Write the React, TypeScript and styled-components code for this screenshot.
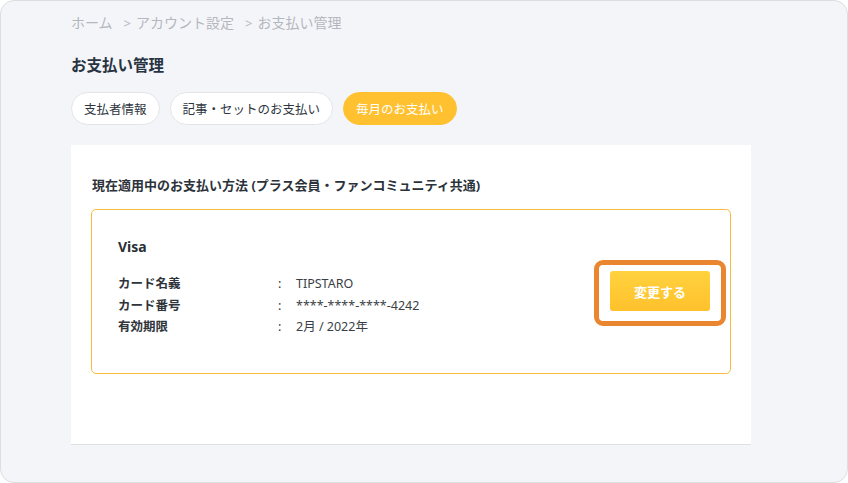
import styled, { createGlobalStyle } from "styled-components";

const GlobalStyle = createGlobalStyle`
  html, body {
    margin: 0;
    padding: 0;
    background: #ffffff;
  }
  * {
    box-sizing: border-box;
  }
`

const Frame = styled.div`
  width: 848px;
  height: 483px;
  border: 1px solid #dcdde0;
  border-radius: 14px;
  background: #f4f5f9;
  padding: 10px 96px 0 70px;
  font-family: "Noto Sans", "Noto Sans CJK JP", sans-serif;
  color: #283341;
  overflow: hidden;
`

const Breadcrumb = styled.div`
  display: flex;
  align-items: center;
  height: 22px;
  font-size: 14px;
  color: #b4b7bd;
`

const Crumb = styled.span<{ $first?: boolean }>`
  margin-left: ${p => (p.$first ? "0" : "11px")};
  &::before {
    content: ${p => (p.$first ? "none" : "'>'")};
    margin-right: 5px;
    font-size: 13px;
  }
`

const Title = styled.h1`
  margin: 20px 0 0;
  font-size: 15.5px;
  font-weight: 700;
  line-height: 24px;
  color: #283341;
`

const Tabs = styled.div`
  display: flex;
  gap: 10px;
  margin-top: 15px;
`

const Tab = styled.button<{ $active?: boolean }>`
  height: 33px;
  padding: 0 12px;
  border-radius: 17px;
  border: 1px solid ${p => (p.$active ? "#ffc12f" : "#e3e4e7")};
  background: ${p => (p.$active ? "#ffc12f" : "#ffffff")};
  color: ${p => (p.$active ? "#ffffff" : "#2e3540")};
  font-family: inherit;
  font-size: 12.5px;
  cursor: pointer;
`

const Panel = styled.section`
  margin-top: 20px;
  width: 680px;
  height: 300px;
  background: #ffffff;
  border-bottom: 1px solid #dfe0e3;
  padding: 31px 20px 0;
`

const Heading = styled.h2`
  margin: 0 0 0 1px;
  font-size: 13px;
  font-weight: 700;
  line-height: 18px;
  color: #2c323a;
`

const Card = styled.div`
  margin-top: 15px;
  height: 165px;
  border: 1px solid #f5bd3c;
  border-radius: 5px;
  padding: 0 4px 0 26px;
  display: flex;
  align-items: center;
  justify-content: space-between;
`

const Info = styled.div`
  display: flex;
  flex-direction: column;
  margin-bottom: 8px;
`

const Brand = styled.div`
  font-size: 14px;
  font-weight: 700;
  line-height: 20px;
  color: #2a2f36;
  margin-bottom: 16px;
`

const Row = styled.div`
  display: flex;
  font-size: 12.5px;
  line-height: 21.5px;
  color: #2f343b;
`

const Label = styled.span`
  width: 160px;
  font-weight: 700;
`

const Colon = styled.span`
  width: 18px;
`

const Value = styled.span`
  color: #3a3f46;
`

const Highlight = styled.div`
  margin-top: 3px;
  border: 5px solid #ea8630;
  border-radius: 9px;
  padding: 6px 11px 10px;
`

const ChangeButton = styled.button`
  width: 100px;
  height: 40px;
  border: none;
  border-radius: 3px;
  background: linear-gradient(#ffd23e, #ffc12c);
  color: #ffffff;
  font-family: inherit;
  font-size: 13px;
  font-weight: 700;
  cursor: pointer;
`

const rows = [
  { label: "カード名義", value: "TIPSTARO" },
  { label: "カード番号", value: "****-****-****-4242" },
  { label: "有効期限", value: "2月 / 2022年" },
]

export default function App() {
  return (
    <>
      <GlobalStyle />
      <Frame>
        <Breadcrumb>
          <Crumb $first>ホーム</Crumb>
          <Crumb>アカウント設定</Crumb>
          <Crumb>お支払い管理</Crumb>
        </Breadcrumb>
        <Title>お支払い管理</Title>
        <Tabs>
          <Tab>支払者情報</Tab>
          <Tab>記事・セットのお支払い</Tab>
          <Tab $active>毎月のお支払い</Tab>
        </Tabs>
        <Panel>
          <Heading>現在適用中のお支払い方法 (プラス会員・ファンコミュニティ共通)</Heading>
          <Card>
            <Info>
              <Brand>Visa</Brand>
              {rows.map(r => (
                <Row key={r.label}>
                  <Label>{r.label}</Label>
                  <Colon>:</Colon>
                  <Value>{r.value}</Value>
                </Row>
              ))}
            </Info>
            <Highlight>
              <ChangeButton>変更する</ChangeButton>
            </Highlight>
          </Card>
        </Panel>
      </Frame>
    </>
  )
}
